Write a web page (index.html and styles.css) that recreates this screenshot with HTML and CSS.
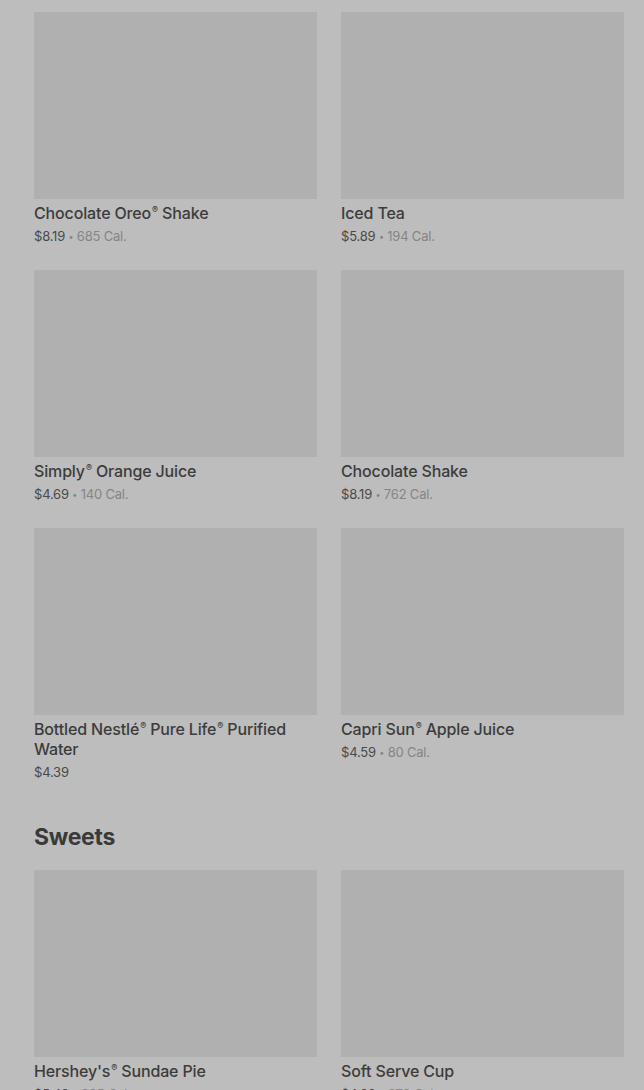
FILE: index.html
```html
<!DOCTYPE html>
<html lang="en">
<head>
    <meta charset="UTF-8">
    <meta name="viewport" content="width=device-width, initial-scale=1.0">
    <title>Menu</title>
    <link rel="stylesheet" href="styles.css">
</head>
<body>
    <div class="menu">
        <div class="grid">
            <div class="card">
                <div class="thumb"></div>
                <div class="name">Chocolate Oreo<sup class="reg">®</sup> Shake</div>
                <div class="meta"><span class="price">$8.19</span> <span class="dot">•</span> 685 Cal.</div>
            </div>
            <div class="card">
                <div class="thumb"></div>
                <div class="name">Iced Tea</div>
                <div class="meta"><span class="price">$5.89</span> <span class="dot">•</span> 194 Cal.</div>
            </div>
            <div class="card">
                <div class="thumb"></div>
                <div class="name">Simply<sup class="reg">®</sup> Orange Juice</div>
                <div class="meta"><span class="price">$4.69</span> <span class="dot">•</span> 140 Cal.</div>
            </div>
            <div class="card">
                <div class="thumb"></div>
                <div class="name">Chocolate Shake</div>
                <div class="meta"><span class="price">$8.19</span> <span class="dot">•</span> 762 Cal.</div>
            </div>
            <div class="card">
                <div class="thumb"></div>
                <div class="name">Bottled Nestlé<sup class="reg">®</sup> Pure Life<sup class="reg">®</sup> Purified Water</div>
                <div class="meta"><span class="price">$4.39</span></div>
            </div>
            <div class="card">
                <div class="thumb"></div>
                <div class="name">Capri Sun<sup class="reg">®</sup> Apple Juice</div>
                <div class="meta"><span class="price">$4.59</span> <span class="dot">•</span> 80 Cal.</div>
            </div>
        </div>

        <h2 class="section-title">Sweets</h2>

        <div class="grid">
            <div class="card">
                <div class="thumb"></div>
                <div class="name">Hershey's<sup class="reg">®</sup> Sundae Pie</div>
                <div class="meta"><span class="price">$5.49</span> <span class="dot">•</span> 305 Cal.</div>
            </div>
            <div class="card">
                <div class="thumb"></div>
                <div class="name">Soft Serve Cup</div>
                <div class="meta"><span class="price">$4.09</span> <span class="dot">•</span> 270 Cal.</div>
            </div>
        </div>
    </div>
</body>
</html>
```

FILE: styles.css
```css
body {
    margin: 0;
    padding: 0;
    background-color: #bdbdbd;
    font-family: Inter, "Liberation Sans", Arial, sans-serif;
    color: #3a3a3a;
}
.menu {
    padding: 12px 20px 0 34px;
}
.grid {
    display: grid;
    grid-template-columns: 283px 283px;
    column-gap: 24px;
    row-gap: 26px;
}
.thumb {
    height: 187px;
    background-color: #b0b0b0;
}
.name {
    margin-top: 4px;
    font-size: 16px;
    line-height: 20px;
    height: auto;
    font-weight: 500;
    letter-spacing: -0.15px;
    color: #3c3c3c;
}
.reg {
    font-size: 9px;
    line-height: 0;
    vertical-align: 6px;
    margin-left: 1px;
}
.meta {
    margin-top: 5px;
    font-size: 13px;
    line-height: 16px;
    letter-spacing: -0.2px;
    color: #858585;
}
.price {
    color: #4a4a4a;
}
.dot {
    font-size: 9px;
    line-height: 0;
    vertical-align: 1px;
}
.section-title {
    margin: 41px 0 17px;
    font-size: 23px;
    line-height: 32px;
    font-weight: 700;
    letter-spacing: -0.3px;
    color: #3a3a3a;
}
```
